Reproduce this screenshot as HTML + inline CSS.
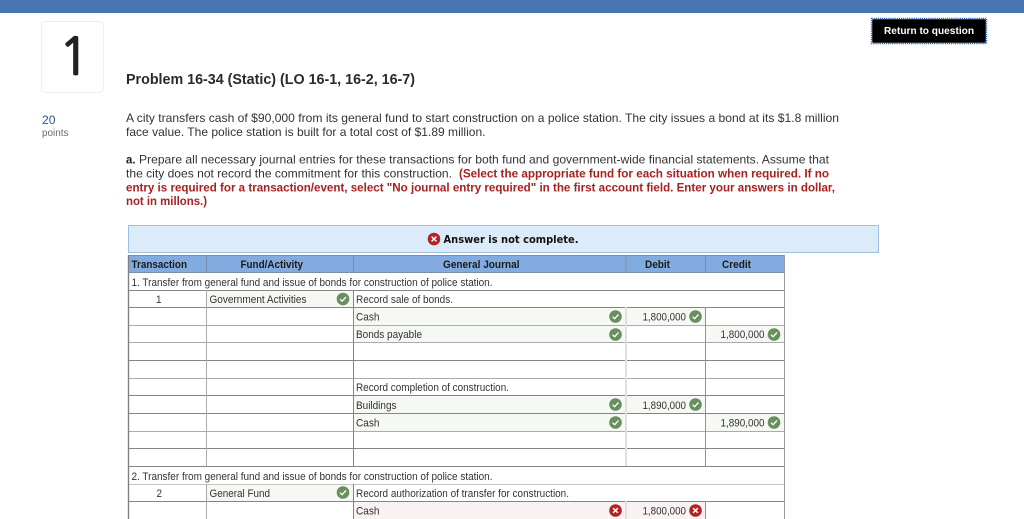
<!DOCTYPE html>
<html lang="en"><head><meta charset="utf-8"><title>Problem 16-34</title>
<style>
html,body{margin:0;padding:0;background:#fff;width:1024px;height:519px;overflow:hidden}
svg{display:block;filter:blur(0.3px)}
text{font-family:"Liberation Sans",sans-serif}
.b{font-size:11.8px;fill:#333}
.r{font-size:11.5px;font-weight:bold;fill:#a82020}
.t{font-size:10.8px;fill:#333}
.h{font-size:10.8px;font-weight:bold;fill:#1a1a1a}
</style></head><body>
<svg width="1024" height="519" viewBox="0 0 1024 519" xmlns="http://www.w3.org/2000/svg">
<defs>
<g id="ok"><circle r="6.3" fill="#68905f"/><path d="M-3 0.2L-0.9 2.2L3 -2" fill="none" stroke="#fff" stroke-width="1.3"/></g>
<g id="no"><circle r="6.3" fill="#b02424"/><path d="M-2.4 -2.4L2.4 2.4M2.4 -2.4L-2.4 2.4" fill="none" stroke="#fff" stroke-width="1.5"/></g>
</defs>
<rect width="1024" height="13" fill="#4876b3"/>

<rect x="41.5" y="21.5" width="62" height="71" rx="4" fill="#fff" stroke="#eeeeee"/>
<text x="59" y="74.5" font-size="50" style="font-family:'NanumGothic',sans-serif" fill="#222" stroke="#222" stroke-width="1.7" stroke-linejoin="round">1</text>

<text x="126" y="84" font-size="14.5" font-weight="bold" fill="#2a2a2a" textLength="289" lengthAdjust="spacingAndGlyphs">Problem 16-34 (Static) (LO 16-1, 16-2, 16-7)</text>
<text x="42" y="124" font-size="11.5" fill="#2a5590" textLength="13.5" lengthAdjust="spacingAndGlyphs">20</text>
<text x="42" y="136" font-size="10" fill="#6a6a6a" textLength="26.5" lengthAdjust="spacingAndGlyphs">points</text>

<text class="b" x="126" y="122" textLength="713" lengthAdjust="spacingAndGlyphs">A city transfers cash of $90,000 from its general fund to start construction on a police station. The city issues a bond at its $1.8 million</text>
<text class="b" x="126" y="136" textLength="359.5" lengthAdjust="spacingAndGlyphs">face value. The police station is built for a total cost of $1.89 million.</text>
<text x="126" y="163.5" font-size="12" fill="#222" font-weight="bold" textLength="9.5" lengthAdjust="spacingAndGlyphs">a.</text>
<text class="b" x="139" y="163.5" textLength="690" lengthAdjust="spacingAndGlyphs">Prepare all necessary journal entries for these transactions for both fund and government-wide financial statements. Assume that</text>
<text class="b" x="126" y="177.5" textLength="326" lengthAdjust="spacingAndGlyphs">the city does not record the commitment for this construction.</text>
<text class="r" x="459" y="177.5" textLength="370" lengthAdjust="spacingAndGlyphs">(Select the appropriate fund for each situation when required. If no</text>
<text class="r" x="126" y="191.5" textLength="709" lengthAdjust="spacingAndGlyphs">entry is required for a transaction/event, select "No journal entry required" in the first account field. Enter your answers in dollar,</text>
<text class="r" x="126" y="205" textLength="81" lengthAdjust="spacingAndGlyphs">not in millons.)</text>

<rect x="872" y="19" width="114" height="24" rx="2" fill="#000"/>
<rect x="871.5" y="18.5" width="115" height="25" fill="none" stroke="#fff" stroke-width="1.4"/>
<rect x="871.5" y="18.5" width="115" height="25" fill="none" stroke="#2f62b0" stroke-width="1.4" stroke-dasharray="1.2 0.9"/>
<text x="884" y="34" font-size="10.5" font-weight="bold" fill="#fff" textLength="90" lengthAdjust="spacingAndGlyphs">Return to question</text>

<rect x="128.5" y="225.5" width="750" height="27" fill="#dcebf9" stroke="#9dc0e6"/>
<use href="#no" x="434" y="239"/>
<text x="443.5" y="243" font-size="10.5" font-weight="bold" fill="#111" style="font-family:'DejaVu Sans',sans-serif" textLength="135" lengthAdjust="spacingAndGlyphs">Answer is not complete.</text>

<!-- header -->
<rect x="129" y="256" width="655" height="17" fill="#82acdf"/>
<!-- correct / incorrect cell fills -->
<g fill="#f6f8f4">
<rect x="207" y="291" width="146" height="16"/>
<rect x="354" y="308" width="271" height="34"/>
<rect x="627" y="308" width="78" height="17"/>
<rect x="706" y="326" width="78" height="16"/>
<rect x="354" y="396" width="271" height="35"/>
<rect x="627" y="396" width="78" height="17"/>
<rect x="706" y="414" width="78" height="17"/>
<rect x="207" y="485" width="146" height="16"/>
</g>
<rect x="354" y="502" width="271" height="17" fill="#f9f2f2"/>
<rect x="627" y="502" width="78" height="17" fill="#f9f2f2"/>

<!-- horizontal rules -->
<g stroke-width="1">
<path d="M128 255.5H784M128 272.5H784" stroke="#7f8fa3"/>
<path d="M128 290.5H784M128 307.5H784M128 360.5H784M128 395.5H784M128 413.5H784M128 448.5H784M128 466.5H784M128 501.5H784" stroke="#858585"/>
<path d="M128 325.5H784M128 342.5H784M128 378.5H784M128 431.5H784" stroke="#ababab"/>
<path d="M128 484.5H784" stroke="#c4c4c4"/>
</g>
<!-- vertical rules -->
<g fill="none">
<path d="M128.5 255V519" stroke="#808080" stroke-width="1.4"/>
<path d="M784.5 255V519" stroke="#9a9a9a"/>
<path d="M206.5 255V273" stroke="#7f8fa3"/>
<path d="M353.5 255V273M626 255V273M705.5 255V273" stroke="#7f8fa3"/>
<path d="M206.5 290V466M206.5 484V519" stroke="#ababab"/>
<path d="M353.5 290V466M353.5 484V519" stroke="#858585"/>
<path d="M626 307V466M626 501V519" stroke="#e0e0e0" stroke-width="2"/>
<path d="M705.5 307V466M705.5 501V519" stroke="#939393"/>
</g>

<!-- header text -->
<text class="h" x="131.5" y="268" textLength="55.5" lengthAdjust="spacingAndGlyphs">Transaction</text>
<text class="h" x="240.5" y="268" textLength="62.5" lengthAdjust="spacingAndGlyphs">Fund/Activity</text>
<text class="h" x="443" y="268" textLength="76.5" lengthAdjust="spacingAndGlyphs">General Journal</text>
<text class="h" x="645" y="268" textLength="25" lengthAdjust="spacingAndGlyphs">Debit</text>
<text class="h" x="722" y="268" textLength="29" lengthAdjust="spacingAndGlyphs">Credit</text>

<!-- table text -->
<text class="t" x="131.5" y="286" textLength="361" lengthAdjust="spacingAndGlyphs">1. Transfer from general fund and issue of bonds for construction of police station.</text>
<text class="t" x="156" y="303" textLength="5.5" lengthAdjust="spacingAndGlyphs">1</text>
<text class="t" x="209.5" y="303" textLength="97" lengthAdjust="spacingAndGlyphs">Government Activities</text>
<text class="t" x="356" y="303" textLength="97" lengthAdjust="spacingAndGlyphs">Record sale of bonds.</text>
<text class="t" x="356" y="320.5" textLength="23.5" lengthAdjust="spacingAndGlyphs">Cash</text>
<text class="t" x="642.5" y="320.5" textLength="43.5" lengthAdjust="spacingAndGlyphs">1,800,000</text>
<text class="t" x="356" y="338" textLength="66" lengthAdjust="spacingAndGlyphs">Bonds payable</text>
<text class="t" x="720.5" y="338" textLength="44" lengthAdjust="spacingAndGlyphs">1,800,000</text>
<text class="t" x="356" y="391" textLength="153" lengthAdjust="spacingAndGlyphs">Record completion of construction.</text>
<text class="t" x="356" y="409" textLength="40.5" lengthAdjust="spacingAndGlyphs">Buildings</text>
<text class="t" x="642.5" y="409" textLength="43.5" lengthAdjust="spacingAndGlyphs">1,890,000</text>
<text class="t" x="356" y="426.5" textLength="23.5" lengthAdjust="spacingAndGlyphs">Cash</text>
<text class="t" x="720.5" y="426.5" textLength="44" lengthAdjust="spacingAndGlyphs">1,890,000</text>
<text class="t" x="131.5" y="480" textLength="361" lengthAdjust="spacingAndGlyphs">2. Transfer from general fund and issue of bonds for construction of police station.</text>
<text class="t" x="156.5" y="497" textLength="5.5" lengthAdjust="spacingAndGlyphs">2</text>
<text class="t" x="209.5" y="497" textLength="60.5" lengthAdjust="spacingAndGlyphs">General Fund</text>
<text class="t" x="356" y="497" textLength="213" lengthAdjust="spacingAndGlyphs">Record authorization of transfer for construction.</text>
<text class="t" x="356" y="514.5" textLength="23.5" lengthAdjust="spacingAndGlyphs">Cash</text>
<text class="t" x="642.5" y="514.5" textLength="43.5" lengthAdjust="spacingAndGlyphs">1,800,000</text>

<!-- status icons -->
<use href="#ok" x="343" y="299"/>
<use href="#ok" x="615.5" y="316.5"/>
<use href="#ok" x="695.5" y="316.5"/>
<use href="#ok" x="615.5" y="334.5"/>
<use href="#ok" x="774" y="334.5"/>
<use href="#ok" x="615.5" y="404.5"/>
<use href="#ok" x="695.5" y="404.5"/>
<use href="#ok" x="615.5" y="422.5"/>
<use href="#ok" x="774" y="422.5"/>
<use href="#ok" x="343" y="492.5"/>
<use href="#no" x="615.5" y="510.5"/>
<use href="#no" x="695.5" y="510.5"/>
</svg>
</body></html>
